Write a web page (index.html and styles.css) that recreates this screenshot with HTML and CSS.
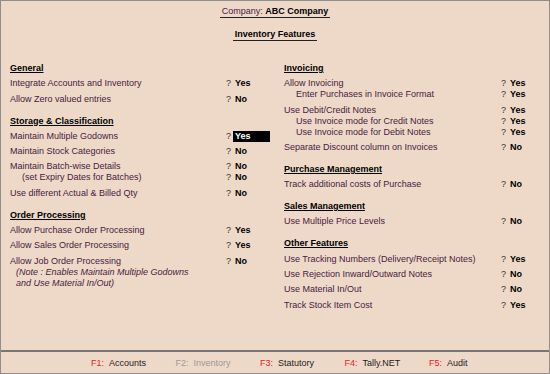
FILE: index.html
```html
<!DOCTYPE html><html>
<head>
<title>Inventory Features</title>
<link rel="stylesheet" href="styles.css">
</head>
<body>
<div class="window">
	<div class="main">
		<div class="top">
			<div class="company"><span class="lbl">Company:</span> <b>ABC Company</b></div>
			<div><div class="title">Inventory Features</div></div>
		</div>
		<div class="cols">
			<div class="col">
				<div class="sect">
					<div class="head">General</div>
					<div class="item"><div class="row"><span class="lbl">Integrate Accounts and Inventory</span><span class="q">?</span><span class="v">Yes</span></div></div>
					<div class="item"><div class="row"><span class="lbl">Allow Zero valued entries</span><span class="q">?</span><span class="v">No</span></div></div>
				</div>
				<div class="sect">
					<div class="head">Storage &amp; Classification</div>
					<div class="item"><div class="row"><span class="lbl">Maintain Multiple Godowns</span><span class="q">?</span><span class="v sel">Yes</span></div></div>
					<div class="item"><div class="row"><span class="lbl">Maintain Stock Categories</span><span class="q">?</span><span class="v">No</span></div></div>
					<div class="item">
						<div class="row"><span class="lbl">Maintain Batch-wise Details</span><span class="q">?</span><span class="v">No</span></div>
						<div class="row sub"><span class="lbl">(set Expiry Dates for Batches)</span><span class="q">?</span><span class="v">No</span></div>
					</div>
					<div class="item"><div class="row"><span class="lbl">Use different Actual &amp; Billed Qty</span><span class="q">?</span><span class="v">No</span></div></div>
				</div>
				<div class="sect">
					<div class="head">Order Processing</div>
					<div class="item"><div class="row"><span class="lbl">Allow Purchase Order Processing</span><span class="q">?</span><span class="v">Yes</span></div></div>
					<div class="item"><div class="row"><span class="lbl">Allow Sales Order Processing</span><span class="q">?</span><span class="v">Yes</span></div></div>
					<div class="item">
						<div class="row"><span class="lbl">Allow Job Order Processing</span><span class="q">?</span><span class="v">No</span></div>
						<div class="note">(Note : Enables Maintain Multiple Godowns<br>and Use Material In/Out)</div>
					</div>
				</div>
			</div>
			<div class="col">
				<div class="sect">
					<div class="head">Invoicing</div>
					<div class="item">
						<div class="row"><span class="lbl">Allow Invoicing</span><span class="q">?</span><span class="v">Yes</span></div>
						<div class="row sub"><span class="lbl">Enter Purchases in Invoice Format</span><span class="q">?</span><span class="v">Yes</span></div>
					</div>
					<div class="item">
						<div class="row"><span class="lbl">Use Debit/Credit Notes</span><span class="q">?</span><span class="v">Yes</span></div>
						<div class="row sub"><span class="lbl">Use Invoice mode for Credit Notes</span><span class="q">?</span><span class="v">Yes</span></div>
						<div class="row sub"><span class="lbl">Use Invoice mode for Debit Notes</span><span class="q">?</span><span class="v">Yes</span></div>
					</div>
					<div class="item"><div class="row"><span class="lbl">Separate Discount column on Invoices</span><span class="q">?</span><span class="v">No</span></div></div>
				</div>
				<div class="sect">
					<div class="head">Purchase Management</div>
					<div class="item"><div class="row"><span class="lbl">Track additional costs of Purchase</span><span class="q">?</span><span class="v">No</span></div></div>
				</div>
				<div class="sect">
					<div class="head">Sales Management</div>
					<div class="item"><div class="row"><span class="lbl">Use Multiple Price Levels</span><span class="q">?</span><span class="v">No</span></div></div>
				</div>
				<div class="sect">
					<div class="head">Other Features</div>
					<div class="item"><div class="row"><span class="lbl">Use Tracking Numbers (Delivery/Receipt Notes)</span><span class="q">?</span><span class="v">Yes</span></div></div>
					<div class="item"><div class="row"><span class="lbl">Use Rejection Inward/Outward Notes</span><span class="q">?</span><span class="v">No</span></div></div>
					<div class="item"><div class="row"><span class="lbl">Use Material In/Out</span><span class="q">?</span><span class="v">No</span></div></div>
					<div class="item"><div class="row"><span class="lbl">Track Stock Item Cost</span><span class="q">?</span><span class="v">Yes</span></div></div>
				</div>
			</div>
		</div>
	</div>
	<div class="footer">
		<div class="fkey"><span class="k">F1:</span>Accounts</div>
		<div class="fkey off"><span class="k">F2:</span>Inventory</div>
		<div class="fkey"><span class="k">F3:</span>Statutory</div>
		<div class="fkey"><span class="k">F4:</span>Tally.NET</div>
		<div class="fkey"><span class="k">F5:</span>Audit</div>
	</div>
</div>
</body></html>
```

FILE: styles.css
```css
body {
	margin: 0;
	font: 9px "Liberation Sans", Arial, sans-serif;
	color: #000;
}

.window {
	width: 550px;
	height: 374px;
	box-sizing: border-box;
	border: 1px solid #8e8e8e;
	background: #eed9c9;
	display: flex;
	flex-direction: column;
}
.main {flex: 1;}

.top {
	text-align: center;
	padding-top: 5px;
}
.company, .title {
	display: inline-block;
	line-height: 11px;
	padding: 0 2px;
	border-bottom: 1px solid #222;
}
.title {
	margin-top: 11px;
	font-weight: bold;
}

.lbl {color: #48203f;}

.cols {
	display: grid;
	grid-template-columns: 260px 261px;
	column-gap: 14px;
	padding-left: 9px;
	margin-top: 22px;
}
.sect + .sect {margin-top: 11px;}
.head {
	font-weight: bold;
	line-height: 11px;
	margin-bottom: 4px;
	text-decoration: underline;
}
.item {margin-top: 4.3px;}
.row {
	display: flex;
	line-height: 11px;
}
.row .lbl {flex: 1;}
.row.sub .lbl {padding-left: 12px;}
.q {
	width: 7px;
	color: #333;
}
.v {
	width: 35px;
	padding-left: 2px;
	font-weight: bold;
}
.v.sel {
	background: #000;
	color: #fff;
}
.note {
	color: #48203f;
	font-style: italic;
	line-height: 11px;
	padding-left: 6px;
}

.footer {
	height: 21px;
	border-top: 2px solid #767676;
	display: flex;
	align-items: center;
	padding-left: 90px;
	color: #222;
}
.fkey {width: 84.5px;}
.fkey .k {
	color: #e82424;
	margin-right: 5px;
}
.fkey.off, .fkey.off .k {color: #9a9a9a;}
```
